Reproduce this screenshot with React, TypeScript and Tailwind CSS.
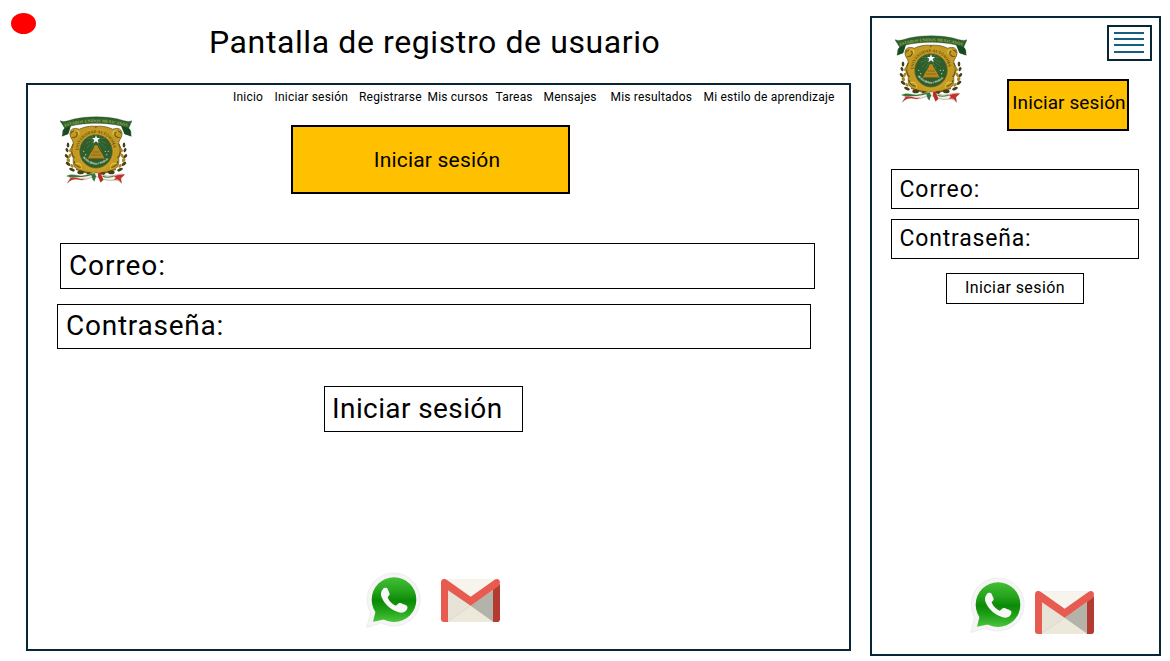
import React from "react";

const navItems = [
  { label: "Inicio", cls: "w-[41.5px]" },
  { label: "Iniciar sesión", cls: "w-[84.5px]" },
  { label: "Registrarse", cls: "w-[68.5px]" },
  { label: "Mis cursos", cls: "w-[68px]" },
  { label: "Tareas", cls: "w-[48px]" },
  { label: "Mensajes", cls: "w-[67px]" },
  { label: "Mis resultados", cls: "w-[93px]" },
  { label: "Mi estilo de aprendizaje", cls: "w-[135px]" },
];

function HalfWreath() {
  return (
    <g>
      <path d="M88 72C70 66 60 72 60 86C60 98 70 100 70 112C62 122 60 140 70 152C68 168 72 180 84 184C92 190 104 194 138 198V64C118 62 102 66 88 72Z" fill="#c39a22" stroke="#5e4a14" strokeWidth="2" />
      <path d="M62 84C68 74 80 76 82 86C78 96 70 96 66 94M70 112C62 126 64 144 74 152M72 160C74 172 84 178 96 178M78 184C92 186 106 194 124 192" fill="none" stroke="#6f5612" strokeWidth="3" />
      <path d="M72 80C82 72 90 78 86 88M76 168C88 164 96 170 94 182" fill="none" stroke="#e8c550" strokeWidth="3" />
      <g fill="#453f18">
        <ellipse cx="54" cy="116" rx="4" ry="7" />
        <ellipse cx="51" cy="130" rx="4" ry="6" transform="rotate(-30 51 130)" />
        <ellipse cx="50" cy="147" rx="4" ry="7" transform="rotate(-45 50 147)" />
        <ellipse cx="54" cy="168" rx="8" ry="4" transform="rotate(35 54 168)" />
        <ellipse cx="66" cy="184" rx="9" ry="4" transform="rotate(20 66 184)" />
        <ellipse cx="92" cy="192" rx="10" ry="5" />
        <ellipse cx="118" cy="196" rx="8" ry="4" transform="rotate(15 118 196)" />
      </g>
      <g fill="#a78522">
        <ellipse cx="62" cy="130" rx="4" ry="6" transform="rotate(30 62 130)" />
        <ellipse cx="59" cy="146" rx="4" ry="7" transform="rotate(30 59 146)" />
        <ellipse cx="55" cy="158" rx="5" ry="6" transform="rotate(-30 55 158)" />
        <ellipse cx="66" cy="174" rx="6" ry="4" transform="rotate(40 66 174)" />
      </g>
    </g>
  );
}

function Crest() {
  const id = React.useId();
  return (
    <svg viewBox="30 30 216 210" className="block h-[70px] w-[72px] shrink-0">
      <defs>
        <path id={id + "t"} d="M44 65Q138 38 232 65" />
        <path id={id + "r"} d="M86 136A52 52 0 0 1 190 136" />
        <path id={id + "b"} d="M98 158Q138 200 180 158" />
      </defs>
      <g transform="translate(0 -5.1) scale(1 1.08)">
        <HalfWreath />
        <g transform="translate(276 0) scale(-1 1)"><HalfWreath /></g>
      </g>
      <path d="M138 70C176 70 194 98 194 132S172 200 138 200S82 166 82 132S102 70 138 70Z" fill="#c99f25" />
      <text fontSize="13" fontWeight="700" fill="#5d4a13" fontFamily="Liberation Serif, serif">
        <textPath href={"#" + id + "r"} textLength="156" lengthAdjust="spacingAndGlyphs">UNIVERSIDAD AUTÓNOMA</textPath>
      </text>
      <ellipse cx="138" cy="139" rx="49" ry="50" fill="#2e5e2c" stroke="#75651c" strokeWidth="2" />
      <g stroke="#8fae87" strokeWidth="1.2" strokeDasharray="3 2">
        <path d="M138 102L112 100M138 102L106 116M138 102L110 130M138 102L122 136M138 102L154 136M138 102L168 130M138 102L170 116M138 102L164 100M138 102L124 92M138 102L152 92" />
      </g>
      <path d="M113 161L122 144L130 132L134 121H142L147 132L155 144L164 161Z" fill="#b98b1c" />
      <path d="M128 141H149M123 150H154M116 160H161" stroke="#70531b" strokeWidth="2" />
      <path d="M138 90L141 99H150L143 105L146 115L138 109L130 115L133 105L126 99H135Z" fill="#fff" />
      <g fill="#b9cdb3"><circle cx="101" cy="139" r="2" /><circle cx="107" cy="149" r="2" /><circle cx="166" cy="139" r="2" /><circle cx="175" cy="139" r="2" /><circle cx="170" cy="149" r="2" /></g>
      <text fontSize="8" fontWeight="700" fill="#eef2e6" fontFamily="Liberation Sans, sans-serif">
        <textPath href={"#" + id + "b"} textLength="88" lengthAdjust="spacingAndGlyphs">PATRIA CIENCIA Y TRABAJO</textPath>
      </text>
      <path d="M30 47C46 53 58 45 72 42C116 33 162 33 204 42C218 45 232 53 246 47L236 70C246 78 242 86 244 94L224 87L214 63C166 52 110 52 62 63L54 87L36 94C40 86 34 78 44 70Z" fill="#2b622d" stroke="#1c4a22" strokeWidth="1" />
      <path d="M44 70L62 63L54 87L36 93C44 84 38 76 44 70ZM236 70L214 63L224 87L243 93C238 84 244 76 236 70Z" fill="#174a22" />
      <text fontSize="13" fontWeight="700" fill="#b3a94c" fontFamily="Liberation Serif, serif">
        <textPath href={"#" + id + "t"} textLength="190" lengthAdjust="spacingAndGlyphs">ESTADOS UNIDOS MEXICANOS</textPath>
      </text>
      <g transform="translate(-3 -1) scale(1.022 1.055)">
        <path d="M52 203C70 194 84 205 100 202C116 200 126 192 138 194C152 194 158 202 174 203C190 204 204 194 222 199L211 209L213 223C200 209 188 217 172 215C156 213 148 206 138 205C124 204 112 214 96 214C78 212 70 207 54 223L64 207Z" fill="#f4eee4" stroke="#8c8378" strokeWidth="1.5" />
        <path d="M52 203C70 194 84 205 100 202C112 200 120 196 130 194L126 200C108 206 84 206 64 207Z" fill="#357a35" />
        <path d="M64 208C84 204 88 214 108 210L96 214C78 212 70 208 54 223Z" fill="#c42f2c" />
        <path d="M144 194L151 193L160 214L151 221L144 204Z" fill="#bd2925" />
        <path d="M190 203C202 201 210 197 222 199L211 209L213 225C206 212 200 211 190 215L196 208Z" fill="#c8302d" />
        <path d="M124 200L134 194L138 204L133 219L128 212Z" fill="#347239" />
        <path d="M157 203C168 210 180 206 190 203" fill="none" stroke="#48824a" strokeWidth="3" />
      </g>
    </svg>
  );
}

function WhatsAppIcon() {
  const id = React.useId();
  return (
    <svg viewBox="30 36 171 171" className="block h-[57px] w-[57px] shrink-0">
      <defs>
        <linearGradient id={id} x1="0" y1="52" x2="0" y2="187" gradientUnits="userSpaceOnUse">
          <stop offset="0" stopColor="#43bd36" />
          <stop offset=".3" stopColor="#27a51d" />
          <stop offset=".52" stopColor="#0b8a06" />
          <stop offset=".72" stopColor="#1fa016" />
          <stop offset="1" stopColor="#4cc63e" />
        </linearGradient>
      </defs>
      <path d="M35 203L47 158A79.5 79.5 0 1 1 79 189Z" fill="#f5f5f5" stroke="#e0e0e0" strokeWidth="1.5" />
      <circle cx="117" cy="119" r="67" fill={"url(#" + id + ")"} />
      <path d="M54 185L62 154L90 178Z" fill={"url(#" + id + ")"} />
      <path d="M84 87C88 82 96 83 98 87L104 101C105 105 99 109 98 112C101 122 112 133 122 137C126 136 130 129 134 129C139 129 152 135 156 138C160 143 155 153 148 156C139 160 132 158 123 154C105 147 87 131 80 112C76 102 78 93 84 87Z" fill="#f8f8f8" />
    </svg>
  );
}

function GmailIcon() {
  return (
    <svg viewBox="258 57 177 129" className="block h-[43px] w-[59px] shrink-0">
      <rect x="262" y="58" width="169" height="127" rx="8" fill="#e8e5da" />
      <path d="M270 58H424L347 113Z" fill="#f7f4ed" />
      <path d="M278 91L347 137L278 185Z" fill="#e7e3d7" />
      <path d="M347 137L415 91V185Z" fill="#b4b3a9" />
      <path d="M278 185L347 137L415 185Z" fill="#ece8da" />
      <path d="M278 184L347 137" stroke="#d3cfc3" strokeWidth="1.5" />
      <path d="M347 137L415 91V185Z" fill="#b4b3a9" />
      <path d="M414 86L435 72V176Q435 186 426 186H414Z" fill="#b43b31" />
      <path d="M258 67C258 57 268 54 276 60L347 110L418 60C426 54 435 58 435 67Q435 75 428 80L347 137L279 91V186H267Q258 186 258 177Z" fill="#e85b50" />
    </svg>
  );
}

export default function App() {
  return (
    <div className="flex h-[661px] w-[1170px] overflow-hidden bg-white font-['Roboto',sans-serif] text-black">
      <div className="w-[870px] shrink-0">
        <header className="flex h-[83px] items-start">
          <div className="mt-[13px] ml-[11px] h-[21px] w-[25px] rounded-[50%] bg-[#ff0000]" />
          <h1 className="mt-[22px] ml-[173px] text-[32px] leading-[40px] tracking-[0.6px] whitespace-nowrap">Pantalla de registro de usuario</h1>
        </header>
        <main className="ml-[26px] h-[568px] w-[825px] border-2 border-[#082736]">
          <nav className="mt-[4px] ml-[205px] flex text-[12px] leading-[16px] tracking-[0.2px] whitespace-nowrap">
            {navItems.map((n) => (
              <a key={n.label} className={n.cls + " shrink-0"}>{n.label}</a>
            ))}
          </nav>
          <div className="flex h-[138px] items-start pl-[32px]">
            <div className="mt-[10px]"><Crest /></div>
            <div className="mt-[20px] ml-[159px] flex h-[69px] w-[279px] items-center justify-center border-2 border-black bg-[#ffc000] pt-[2px] pl-[13px] text-[21px] tracking-[0.2px]">Iniciar sesión</div>
          </div>
          <div className="ml-[32px] flex h-[46px] w-[755px] items-center border border-black pl-[8px] text-[28px] tracking-[0.9px]">Correo:</div>
          <div className="mt-[15px] ml-[29px] flex h-[45px] w-[754px] items-center border border-black pb-[2px] pl-[8px] text-[28px] tracking-[0.75px]">Contraseña:</div>
          <button className="mt-[37px] ml-[296px] flex h-[46px] w-[199px] items-center border border-black pl-[7px] text-[28px] tracking-[0.4px]">Iniciar sesión</button>
          <div className="mt-[140px] ml-[337px] flex items-start">
            <WhatsAppIcon />
            <div className="mt-[7px] ml-[19px]"><GmailIcon /></div>
          </div>
        </main>
      </div>
      <aside className="mt-[16px] h-[640px] w-[291px] shrink-0 border-2 border-[#082736]">
        <div className="flex h-[151px] items-start pl-[23px]">
          <div className="mt-[16px]"><Crest /></div>
          <div className="ml-[40px] w-[145px] pt-[7px]">
            <button aria-label="Menú" className="ml-[100px] flex h-[36px] w-[45px] flex-col border-2 border-[#082736] pt-[5px] pl-[5px]">
              <span className="h-[2px] w-[30px] bg-[#156082]" />
              <span className="mt-[4px] h-[2px] w-[30px] bg-[#156082]" />
              <span className="mt-[4px] h-[2px] w-[30px] bg-[#156082]" />
              <span className="mt-[5px] h-[2px] w-[30px] bg-[#156082]" />
            </button>
            <div className="mt-[18px] flex h-[52px] w-[122px] items-center justify-center border-2 border-black bg-[#ffc000] pb-[3px] pl-[2px] text-[19px] tracking-[0.1px] whitespace-nowrap">Iniciar sesión</div>
          </div>
        </div>
        <div className="ml-[19px] flex h-[40px] w-[248px] items-center border border-black pt-[2px] pl-[7.5px] text-[23px] tracking-[0.9px]">Correo:</div>
        <div className="mt-[10px] ml-[19px] flex h-[40px] w-[248px] items-center border border-black pl-[7.5px] text-[23px] tracking-[0.8px]">Contraseña:</div>
        <button className="mt-[14px] ml-[74px] flex h-[31px] w-[138px] items-center justify-center border border-black pb-[2px] text-[16px] tracking-[0.4px]">Iniciar sesión</button>
        <div className="mt-[273px] ml-[97px] flex items-start">
          <WhatsAppIcon />
          <div className="mt-[14px] ml-[9px]"><GmailIcon /></div>
        </div>
      </aside>
    </div>
  );
}
